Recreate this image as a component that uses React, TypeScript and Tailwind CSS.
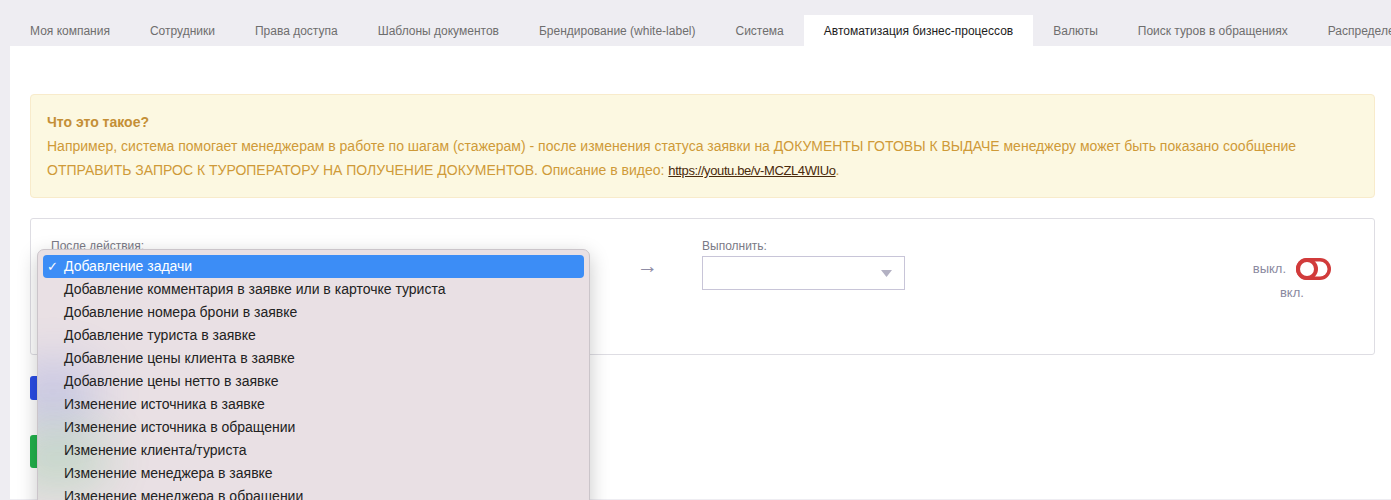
import React from 'react'

const tabs = [
  'Моя компания',
  'Сотрудники',
  'Права доступа',
  'Шаблоны документов',
  'Брендирование (white-label)',
  'Система',
  'Автоматизация бизнес-процессов',
  'Валюты',
  'Поиск туров в обращениях',
  'Распределение обращений',
]

const options = [
  'Добавление задачи',
  'Добавление комментария в заявке или в карточке туриста',
  'Добавление номера брони в заявке',
  'Добавление туриста в заявке',
  'Добавление цены клиента в заявке',
  'Добавление цены нетто в заявке',
  'Изменение источника в заявке',
  'Изменение источника в обращении',
  'Изменение клиента/туриста',
  'Изменение менеджера в заявке',
  'Изменение менеджера в обращении',
  'Изменение статуса заявки',
]

function Toggle() {
  return (
    <svg width="35" height="22" viewBox="0 0 35 22">
      <rect x="0" y="0" width="35" height="22" rx="11" fill="#d13b3b" />
      <rect x="3.5" y="3.5" width="28" height="15" rx="7.5" fill="#fff" />
      <circle cx="11" cy="11" r="11" fill="#d13b3b" />
      <circle cx="11" cy="11" r="7" fill="#fff" />
    </svg>
  )
}

export default function App() {
  const active = 'Автоматизация бизнес-процессов'

  return (
    <div className="min-h-screen w-full overflow-hidden bg-[#eeedf2] pt-[15px] font-['Liberation_Sans',Helvetica,Arial,sans-serif]">
      {/* Tabs */}
      <div className="ml-[10px] flex h-[31px] whitespace-nowrap">
        {tabs.map((t) => (
          <div
            key={t}
            className={`flex h-full shrink-0 items-center px-5 text-[12px] ${
              t === active ? 'bg-white text-[#1c1c1c]' : 'text-[#6e6e6e]'
            }`}
          >
            {t}
          </div>
        ))}
      </div>

      {/* Panel */}
      <div className="ml-[10px] bg-white pb-[31px] pl-5 pr-4 pt-12">
        {/* Info alert */}
        <div className="rounded-[4px] border border-[#f8ebcb] bg-[#fcf8e1] px-4 py-[15px] text-[14px] leading-6 text-[#cf9a38]">
          <div className="font-bold text-[#c48f36]">Что это такое?</div>
          <p>
            Например, система помогает менеджерам в работе по шагам (стажерам) - после изменения статуса заявки на
            ДОКУМЕНТЫ ГОТОВЫ К ВЫДАЧЕ менеджеру может быть показано сообщение ОТПРАВИТЬ ЗАПРОС К ТУРОПЕРАТОРУ НА
            ПОЛУЧЕНИЕ ДОКУМЕНТОВ. Описание в видео:{' '}
            <a href="#" className="text-[13px] leading-[0] tracking-[-0.4px] text-[#4a2a0c] underline">
              https://youtu.be/v-MCZL4WIUo
            </a>
            .
          </p>
        </div>

        {/* Rule card */}
        <div className="relative mt-[20px] h-[137px] rounded-[3px] border border-[#dedde3] bg-white">
          <div className="flex items-start pl-5 pr-[43px] pt-[19px]">
            <div className="w-[586px]">
              <div className="h-4 text-[12px] leading-4 text-[#7a7a86]">После действия:</div>
              <div className="mt-[2px] h-[34px] w-[500px] border border-[#c8c5d8]" />
            </div>
            <div className="mt-[17px] w-[65px] text-[21px] leading-[21px] text-[#8e8ca5]">→</div>
            <div>
              <div className="h-4 text-[12px] leading-4 text-[#7a7a86]">Выполнить:</div>
              <div className="mt-[2px] flex h-[34px] w-[203px] items-center justify-end border border-[#c8c5d8] pr-[12px]">
                <svg width="11" height="7" viewBox="0 0 11 7">
                  <path d="M0 0 L11 0 L5.5 7 Z" fill="#b3b1c3" />
                </svg>
              </div>
            </div>
            <div className="ml-auto mt-5 flex flex-col items-center">
              <div className="flex items-center gap-[10px]">
                <span className="text-[13px] text-[#8a89a0]">выкл.</span>
                <Toggle />
              </div>
              <span className="mt-[5px] text-[13px] leading-4 text-[#8a89a0]">вкл.</span>
            </div>
          </div>

          {/* Open native select menu */}
          <div className="absolute left-[6px] top-[30px] z-10 w-[553px] overflow-hidden rounded-[7px] border border-[#cbc5ca] bg-[#e9e0e4] pt-[5px] shadow-[0_6px_20px_rgba(0,0,0,0.22)]">
            <div className="pointer-events-none absolute left-[-30px] top-[112px] h-[60px] w-[90px] rounded-full bg-[#3d5ee0] opacity-20 blur-xl" />
            <div className="pointer-events-none absolute left-[-30px] top-[178px] h-[60px] w-[100px] rounded-full bg-[#2fb35a] opacity-20 blur-xl" />
            {options.map((o, i) => (
              <div
                key={o}
                className={`relative mx-[5px] flex h-[23px] items-center rounded-[4px] text-[14px] ${
                  i === 0 ? 'bg-[#3c8df6] text-white' : 'text-[#222]'
                }`}
              >
                <span className="w-[21px] pl-[4px] text-[13px]">{i === 0 ? '✓' : ''}</span>
                {o}
              </div>
            ))}
          </div>
        </div>

        {/* Buttons (behind the menu) */}
        <button className="mt-[21px] block h-6 rounded-[3px] bg-[#2a4de6] px-4 text-[13px] text-white">
          Добавить правило
        </button>
        <button className="mt-[35px] block h-[33px] rounded-[3px] bg-[#22b24c] px-5 text-[13px] text-white">
          Сохранить
        </button>
      </div>
    </div>
  )
}
